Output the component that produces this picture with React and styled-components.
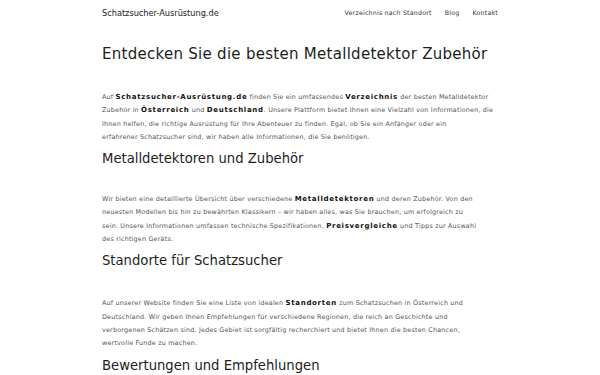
import React from "react";
import styled, { createGlobalStyle } from "styled-components";

const Global = createGlobalStyle`
  html, body { margin: 0; padding: 0; background: #fff; }
  body { font-family: "DejaVu Sans", "Open Sans", sans-serif; color: #222; }
`;

const Page = styled.div`
  width: 600px;
  min-height: 375px;
  background: #fff;
`;

const Header = styled.header`
  width: 396px;
  margin: 0 auto;
  height: 25px;
  display: flex;
  align-items: center;
  justify-content: space-between;
`;

const Logo = styled.a`
  font-size: 8.2px;
  color: #222;
  text-decoration: none;
`;

const Nav = styled.nav`
  display: flex;
  gap: 13px;
`;

const NavLink = styled.a`
  font-size: 6.3px;
  letter-spacing: 0.2px;
  color: #333;
  text-decoration: none;
`;

const Main = styled.main`
  width: 396px;
  margin: 0 auto;
`;

const H1 = styled.h1`
  font-weight: 400;
  font-size: 15px;
  letter-spacing: 0.28px;
  line-height: 20px;
  margin: 19px 0 0;
  color: #1d1d1d;
  white-space: nowrap;
`;

const H2 = styled.h2`
  font-weight: 400;
  font-size: 13.2px;
  line-height: 18px;
  margin: 0;
  color: #1d1d1d;
`;

const P = styled.p`
  font-size: 6.4px;
  letter-spacing: 0.2px;
  line-height: 13.3px;
  color: #555;
  margin: ${(p) => p.$top}px 0 6px;
`;

const Strong = styled.b`
  color: #111;
  font-weight: 700;
  font-size: 7px;
  letter-spacing: 0.7px;
`;

export default function App() {
  return (
    <Page>
      <Global />
      <Header>
        <Logo href="#">Schatzsucher-Ausrüstung.de</Logo>
        <Nav>
          <NavLink href="#">Verzeichnis nach Standort</NavLink>
          <NavLink href="#">Blog</NavLink>
          <NavLink href="#">Kontakt</NavLink>
        </Nav>
      </Header>
      <Main>
        <H1>Entdecken Sie die besten Metalldetektor Zubehör</H1>
        <P $top={27}>
          Auf <Strong>Schatzsucher-Ausrüstung.de</Strong> finden Sie ein umfassendes <Strong>Verzeichnis</Strong> der besten Metalldetektor<br />
          Zubehör in <Strong>Österreich</Strong> und <Strong>Deutschland</Strong>. Unsere Plattform bietet Ihnen eine Vielzahl von Informationen, die<br />
          Ihnen helfen, die richtige Ausrüstung für Ihre Abenteuer zu finden. Egal, ob Sie ein Anfänger oder ein<br />
          erfahrener Schatzsucher sind, wir haben alle Informationen, die Sie benötigen.
        </P>
        <H2>Metalldetektoren und Zubehör</H2>
        <P $top={25}>
          Wir bieten eine detaillierte Übersicht über verschiedene <Strong>Metalldetektoren</Strong> und deren Zubehör. Von den<br />
          neuesten Modellen bis hin zu bewährten Klassikern – wir haben alles, was Sie brauchen, um erfolgreich zu<br />
          sein. Unsere Informationen umfassen technische Spezifikationen, <Strong>Preisvergleiche</Strong> und Tipps zur Auswahl<br />
          des richtigen Geräts.
        </P>
        <H2>Standorte für Schatzsucher</H2>
        <P $top={27}>
          Auf unserer Website finden Sie eine Liste von idealen <Strong>Standorten</Strong> zum Schatzsuchen in Österreich und<br />
          Deutschland. Wir geben Ihnen Empfehlungen für verschiedene Regionen, die reich an Geschichte und<br />
          verborgenen Schätzen sind. Jedes Gebiet ist sorgfältig recherchiert und bietet Ihnen die besten Chancen,<br />
          wertvolle Funde zu machen.
        </P>
        <H2>Bewertungen und Empfehlungen</H2>
      </Main>
    </Page>
  );
}
